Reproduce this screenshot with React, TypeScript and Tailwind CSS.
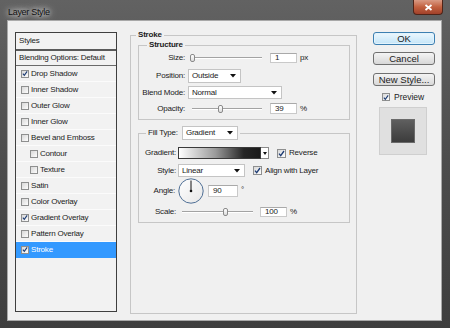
import React from "react";

function Tri() {
  return (
    <svg width="6" height="4" viewBox="0 0 6 4" className="shrink-0">
      <path d="M0 0 H6 L3 3.5 Z" fill="#111" />
    </svg>
  );
}

function Check({ checked, size = "w-[9px] h-[9px]" }: { checked?: boolean; size?: string }) {
  return (
    <span
      className={`${size} shrink-0 inline-flex items-center justify-center border border-[#8e8f8f] bg-gradient-to-br from-[#d8d8d8] to-[#fdfdfd]`}
    >
      {checked && (
        <svg width="7" height="7" viewBox="0 0 7 7">
          <path d="M1 3.6 L2.7 5.6 L6 1" fill="none" stroke="#1d3c74" strokeWidth="1.3" />
        </svg>
      )}
    </span>
  );
}

function Dropdown({ text, w }: { text: string; w: string }) {
  return (
    <div
      className={`${w} h-full shrink-0 flex items-center justify-between bg-white border border-[#c4c4c4] pl-[3px] pr-[4px]`}
    >
      <span>{text}</span>
      <Tri />
    </div>
  );
}

function Input({ value, w }: { value: string; w: string }) {
  return (
    <div
      className={`${w} h-full shrink-0 flex items-center bg-white border border-[#c9c9c9] border-t-[#a9a9a9] pl-[4px]`}
    >
      {value}
    </div>
  );
}

function Slider({ w, thumb }: { w: string; thumb: string }) {
  return (
    <div className={`${w} h-[10px] shrink-0 relative`}>
      <div className="absolute left-0 right-0 top-[4px] h-[2px] border-t border-[#a3a3a3] border-b border-b-white" />
      <div
        className={`absolute ${thumb} top-[1px] w-[5px] h-[8px] rounded-[2px] border border-[#8a8a8a] bg-gradient-to-b from-white to-[#dcdcdc]`}
      />
    </div>
  );
}

const items: { label: string; checked?: boolean; indent?: boolean; selected?: boolean }[] = [
  { label: "Drop Shadow", checked: true },
  { label: "Inner Shadow" },
  { label: "Outer Glow" },
  { label: "Inner Glow" },
  { label: "Bevel and Emboss" },
  { label: "Contour", indent: true },
  { label: "Texture", indent: true },
  { label: "Satin" },
  { label: "Color Overlay" },
  { label: "Gradient Overlay", checked: true },
  { label: "Pattern Overlay" },
  { label: "Stroke", checked: true, selected: true },
];

export default function App() {
  return (
    <div className="w-[450px] h-[328px] flex flex-col overflow-hidden bg-gradient-to-b from-[#626262] via-[#4c4c4c] to-[#3e3e3e] font-['Liberation_Sans',Arial,sans-serif] text-[8px] tracking-[-0.2px] text-[#1b1b1b] leading-none">
      {/* title bar */}
      <div className="relative h-[20px] shrink-0 flex items-center pl-[8px] pt-[4px]">
        <span className="text-[9px] tracking-[-0.3px] text-[#101010] [text-shadow:0_0_5px_#fff,0_0_8px_#ddd]">
          Layer Style
        </span>
        <div className="absolute right-[7px] top-0 w-[30px] h-[15px] rounded-b-[4px] border border-t-0 border-[#4f2418] bg-gradient-to-b from-[#d99a84] via-[#c2603f] to-[#a1412a] flex items-center justify-center">
          <svg width="9" height="7" viewBox="0 0 9 7">
            <path d="M1.5 1 L7.5 6 M7.5 1 L1.5 6" stroke="#fff" strokeWidth="1.8" />
          </svg>
        </div>
      </div>

      {/* client */}
      <div className="flex-1 ml-[7px] mr-[8px] mb-[7px] bg-[#f0f0f0] border border-[#a8a8a8] flex items-start">
        {/* styles list */}
        <div className="ml-[7px] mt-[11px] w-[102px] h-[280px] shrink-0 border border-[#3f3f3f] bg-[#f2f2f2] flex flex-col">
          <div className="h-[18px] shrink-0 flex items-center pl-[3px] border-b-2 border-[#5a5a5a]">Styles</div>
          <div className="h-[15px] shrink-0 flex items-center pl-[3px] border-b border-[#6a6a6a]">
            Blending Options: Default
          </div>
          {items.map((it) => (
            <div
              key={it.label}
              className={`h-[16px] shrink-0 flex items-center gap-[1px] border-b ${
                it.selected ? "bg-[#3399ff] text-white border-[#3399ff]" : "border-[#fbfbfb]"
              } ${it.indent ? "pl-[14px]" : "pl-[5px]"}`}
            >
              <Check checked={it.checked} size="w-[8px] h-[8px]" />
              <span className="ml-[1px]">{it.label}</span>
            </div>
          ))}
        </div>

        {/* Stroke group */}
        <fieldset className="ml-[13px] mt-[9px] w-[227px] h-[284px] shrink-0 border border-[#c6c6c6] pl-[7px] pr-[6px]">
          <legend className="-ml-[2px] px-[2px] font-bold leading-[10px]">Stroke</legend>

          {/* Structure */}
          <fieldset className="w-[212px] border border-[#c6c6c6] pb-[5px]">
            <legend className="ml-[8px] px-[2px] font-bold leading-[10px]">Structure</legend>
            <div className="mt-[3px] h-[10px] flex items-center">
              <span className="w-[46px] text-right">Size:</span>
              <div className="ml-[5px]">
                <Slider w="w-[72px]" thumb="left-[0px]" />
              </div>
              <div className="ml-[8px] h-full">
                <Input value="1" w="w-[27px]" />
              </div>
              <span className="ml-[3px]">px</span>
            </div>
            <div className="mt-[6px] h-[14px] flex items-center">
              <span className="w-[46px] text-right">Position:</span>
              <div className="ml-[3px] h-full">
                <Dropdown text="Outside" w="w-[53px]" />
              </div>
            </div>
            <div className="mt-[3px] h-[13px] flex items-center">
              <span className="w-[46px] text-right">Blend Mode:</span>
              <div className="ml-[3px] h-full">
                <Dropdown text="Normal" w="w-[94px]" />
              </div>
            </div>
            <div className="mt-[4px] h-[11px] flex items-center">
              <span className="w-[46px] text-right">Opacity:</span>
              <div className="ml-[7px]">
                <Slider w="w-[70px]" thumb="left-[26px]" />
              </div>
              <div className="ml-[8px] h-full">
                <Input value="39" w="w-[27px]" />
              </div>
              <span className="ml-[3px]">%</span>
            </div>
          </fieldset>

          {/* Fill type */}
          <fieldset className="mt-[6px] w-[212px] border border-[#c6c6c6] pb-[5px]">
            <legend className="ml-[7px] px-[2px] flex items-center h-[14px]">
              <span>Fill Type:</span>
              <div className="ml-[4px] h-full">
                <Dropdown text="Gradient" w="w-[56px]" />
              </div>
            </legend>
            <div className="mt-[7px] h-[12px] flex items-center">
              <span className="w-[37px] text-right">Gradient:</span>
              <div className="ml-[2px] h-full flex">
                <div className="w-[83px] h-full border border-[#3a3a3a] bg-[linear-gradient(to_right,#ffffff,#9a9a9a_45%,#262626_80%,#1a1a1a)]" />
                <div className="w-[8px] h-full border border-l-0 border-[#8a8a8a] bg-white flex items-center justify-center">
                  <svg width="4" height="3" viewBox="0 0 4 3">
                    <path d="M0 0 H4 L2 3 Z" fill="#111" />
                  </svg>
                </div>
              </div>
              <div className="ml-[8px] flex items-center gap-[3px]">
                <Check checked />
                <span>Reverse</span>
              </div>
            </div>
            <div className="mt-[5px] h-[13px] flex items-center">
              <span className="w-[37px] text-right">Style:</span>
              <div className="ml-[2px] h-full">
                <Dropdown text="Linear" w="w-[67px]" />
              </div>
              <div className="ml-[8px] flex items-center gap-[3px]">
                <Check checked />
                <span>Align with Layer</span>
              </div>
            </div>
            <div className="mt-[1px] h-[26px] flex items-center">
              <span className="w-[36px] text-right">Angle:</span>
              <svg width="26" height="26" viewBox="0 0 26 26" className="ml-[3px] shrink-0">
                <defs>
                  <linearGradient id="dial" x1="0" y1="0" x2="1" y2="1">
                    <stop offset="0" stopColor="#ffffff" />
                    <stop offset="1" stopColor="#e6e6e6" />
                  </linearGradient>
                </defs>
                <circle cx="13" cy="13" r="12.2" fill="url(#dial)" stroke="#4f6f95" strokeWidth="1" />
                <line x1="13" y1="13" x2="13" y2="2.5" stroke="#111" strokeWidth="1" />
                <circle cx="13" cy="13" r="1.3" fill="#111" />
              </svg>
              <div className="ml-[4px] h-[12px]">
                <Input value="90" w="w-[30px]" />
              </div>
              <span className="ml-[3px] self-start mt-[8px]">°</span>
            </div>
            <div className="mt-[3px] h-[10px] flex items-center">
              <span className="w-[37px] text-right">Scale:</span>
              <div className="ml-[6px]">
                <Slider w="w-[71px]" thumb="left-[41px]" />
              </div>
              <div className="ml-[7px] h-full">
                <Input value="100" w="w-[27px]" />
              </div>
              <span className="ml-[3px]">%</span>
            </div>
          </fieldset>
        </fieldset>

        {/* buttons */}
        <div className="ml-[16px] mt-[11px] w-[62px] shrink-0 flex flex-col text-[9.5px] tracking-normal">
          <div className="h-[13px] flex items-center justify-center rounded-[3px] border border-[#3c7fb1] bg-gradient-to-b from-[#ecf7fd] to-[#c4e5f8] shadow-[inset_0_0_0_1px_#e3f3fc]">
            OK
          </div>
          <div className="mt-[7px] h-[13px] flex items-center justify-center rounded-[3px] border border-[#707070] bg-gradient-to-b from-[#f4f4f4] to-[#d8d8d8]">
            Cancel
          </div>
          <div className="mt-[8px] h-[13px] flex items-center justify-center rounded-[3px] border border-[#707070] bg-gradient-to-b from-[#f4f4f4] to-[#d8d8d8]">
            New Style...
          </div>
          <div className="mt-[7px] h-[8px] flex items-center pl-[9px] gap-[4px] text-[8.5px]">
            <Check checked size="w-[8px] h-[8px]" />
            <span>Preview</span>
          </div>
          <div className="mt-[6px] ml-[6px] w-[48px] h-[48px] border border-[#cfcfcf] bg-[#e0e0e0] flex items-center justify-center">
            <div className="w-[24px] h-[24px] border border-[#6a6a6a] bg-gradient-to-b from-[#5f5f5f] to-[#3c3c3c]" />
          </div>
        </div>
      </div>
    </div>
  );
}
